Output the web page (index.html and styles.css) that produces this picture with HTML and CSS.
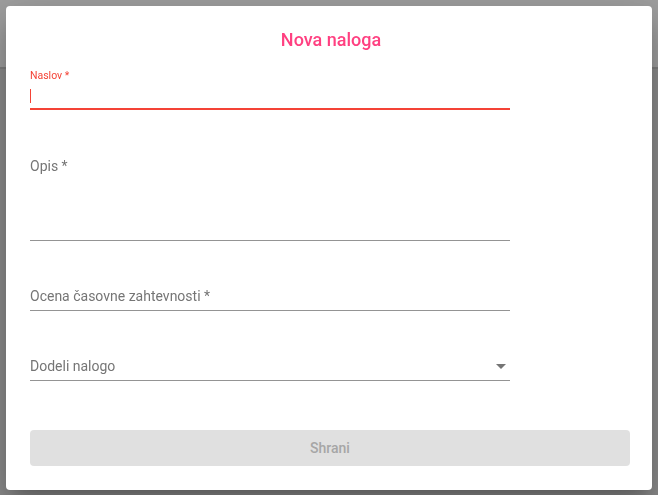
FILE: index.html
```html
<!DOCTYPE html>
<html lang="sl">
<head>
<meta charset="utf-8">
<title>Nova naloga</title>
<link rel="stylesheet" href="styles.css">
</head>
<body>
<div class="app">
  <div class="appbar"></div>
  <div class="app-body"></div>
</div>
<div class="dialog" role="dialog">
  <h2 class="title">Nova naloga</h2>
  <div class="field field-first">
    <label class="label-shrunk">Naslov *</label>
    <div class="input input-focused"><span class="caret"></span></div>
  </div>
  <div class="field field-opis">
    <div class="input input-multi"><span class="placeholder">Opis *</span></div>
  </div>
  <div class="field">
    <div class="input"><span class="placeholder">Ocena časovne zahtevnosti *</span></div>
  </div>
  <div class="field">
    <div class="input input-select">
      <span class="placeholder">Dodeli nalogo</span>
      <svg class="arrow" width="10" height="5" viewBox="0 0 10 5"><path d="M0 0l5 5 5-5z" fill="#757575"/></svg>
    </div>
  </div>
  <button class="btn" disabled>Shrani</button>
</div>
</body>
</html>
```

FILE: styles.css
```css
* { box-sizing: border-box; }
html, body { margin: 0; padding: 0; }
body {
  width: 658px;
  height: 495px;
  overflow: hidden;
  font-family: Roboto, "Liberation Sans", sans-serif;
  background: #8c8c8c;
}
.app { height: 495px; display: flex; flex-direction: column; }
.appbar {
  height: 69px;
  background: #9f9f9f;
  border-bottom: 2px solid #7f7f7f;
}
.app-body { flex: 1; background: #8c8c8c; }

.dialog {
  position: fixed;
  top: 6px;
  left: 6px;
  width: 646px;
  height: 484px;
  background: #fff;
  border-radius: 4px;
  padding: 18px 22px 24px 24px;
  display: flex;
  flex-direction: column;
  box-shadow: 0 11px 15px -7px rgba(0,0,0,.2), 0 24px 38px 3px rgba(0,0,0,.14), 0 9px 46px 8px rgba(0,0,0,.12);
}
.title {
  margin: 0;
  height: 32px;
  line-height: 32px;
  font-size: 18px;
  font-weight: 500;
  color: #ff4081;
  text-align: center;
  padding-left: 2px;
}
.field {
  width: 480px;
  margin-top: 38px;
  display: flex;
  flex-direction: column;
}
.field-first { margin-top: 13px; }
.field-opis { margin-top: 39px; }
.label-shrunk {
  height: 14px;
  line-height: 14px;
  font-size: 10.5px;
  color: #f44336;
}
.input {
  padding: 8px 0 5px;
  border-bottom: 1px solid #949494;
  font-size: 14px;
  line-height: 18px;
  color: #757575;
  display: flex;
  align-items: flex-start;
}
.input-focused {
  height: 27px;
  padding: 6px 0 5px;
  border-bottom: 2px solid #f44336;
}
.caret {
  display: block;
  width: 1px;
  height: 14px;
  background: #f44336;
}
.input-multi { height: 92px; }
.input-select { justify-content: space-between; }
.arrow { display: block; margin: 7px 4px 0 0; }
.placeholder { display: block; }

.btn {
  margin-top: 49px;
  height: 36px;
  width: 600px;
  border: 0;
  border-radius: 4px;
  background: #e0e0e0;
  color: #a6a6a6;
  font-family: Roboto, "Liberation Sans", sans-serif;
  font-size: 14px;
  font-weight: 500;
  padding: 0;
}
```
